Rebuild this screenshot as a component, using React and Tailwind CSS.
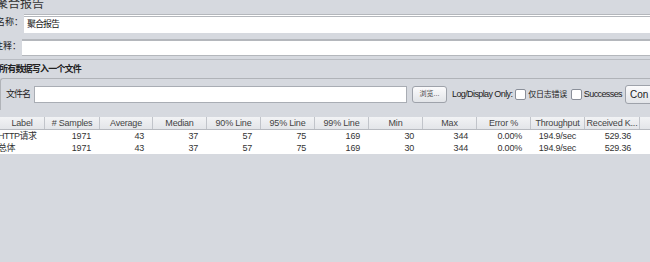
import React from 'react';

const cols = [
  { name: 'Label', w: 'w-[45px]' },
  { name: '# Samples', w: 'w-[55px]' },
  { name: 'Average', w: 'w-[53px]' },
  { name: 'Median', w: 'w-[54px]' },
  { name: '90% Line', w: 'w-[54px]' },
  { name: '95% Line', w: 'w-[54px]' },
  { name: '99% Line', w: 'w-[54px]' },
  { name: 'Min', w: 'w-[54px]' },
  { name: 'Max', w: 'w-[54px]' },
  { name: 'Error %', w: 'w-[54px]' },
  { name: 'Throughput', w: 'w-[54px]' },
  { name: 'Received K...', w: 'w-[55px]' },
  { name: 'S', w: 'w-[40px]' },
];

const rows = [
  ['HTTP请求', '1971', '43', '37', '57', '75', '169', '30', '344', '0.00%', '194.9/sec', '529.36', ''],
  ['总体', '1971', '43', '37', '57', '75', '169', '30', '344', '0.00%', '194.9/sec', '529.36', ''],
];

function Checkbox() {
  return <span className="inline-block w-[11px] h-[11px] border border-[#8a8f99] bg-white rounded-[2px]" />;
}

export default function App() {
  return (
    <div
      className="w-[650px] h-[262px] overflow-hidden bg-[#d6d9df] text-[#222] text-[9px] whitespace-nowrap"
      style={{ fontFamily: '"Liberation Sans", "Noto Sans CJK SC", sans-serif' }}
    >
      <div className="h-[14px] leading-[13px] text-[12px] -ml-[4px] -mt-[2px] text-[#333]">聚合报告</div>

      <div className="flex items-center h-[20px] mt-[1px]">
        <span className="w-[24px] shrink-0 flex justify-end overflow-hidden pr-[1px]">
          <span className="shrink-0">名称：</span>
        </span>
        <div className="flex-1 h-[19px] bg-white border-t-[3px] border-double border-[#b4b7bc] flex items-center pl-[3px] tracking-[-1px]">聚合报告</div>
      </div>

      <div className="flex items-center h-[18px] mt-[5px]">
        <span className="w-[22px] shrink-0 flex justify-end overflow-hidden pr-[1px]">
          <span className="shrink-0">注释：</span>
        </span>
        <div className="flex-1 h-[17px] bg-white border-t-[2px] border-b border-[#b4b7bc]" />
      </div>

      <div className="mt-[3px] border-t border-[#b9bcc2] pt-[4px]">
        <div className="font-bold h-[11px] leading-[11px] -ml-[1px] tracking-[-0.8px]">所有数据写入一个文件</div>
        <div className="mt-[3px] border-t border-l border-[#b0b3b8] rounded-tl-[3px] h-[32px] flex items-center pl-[5px]">
          <span className="w-[28px] shrink-0 tracking-[-1px]">文件名</span>
          <div className="w-[373px] h-[17px] bg-white border border-[#a9adb4] shrink-0" />
          <div className="ml-[5px] w-[35px] h-[17px] shrink-0 border border-[#9ea2aa] rounded-[3px] bg-gradient-to-b from-[#fbfbfc] to-[#e2e4e8] text-[7px] flex items-center justify-center text-[#444]">浏览...</div>
          <span className="ml-[5px] shrink-0 tracking-[-0.6px]">Log/Display Only:</span>
          <span className="ml-[3px] flex items-center shrink-0"><Checkbox /></span>
          <span className="ml-[2px] shrink-0 text-[8px] tracking-[-0.3px]">仅日志错误</span>
          <span className="ml-[4px] flex items-center shrink-0"><Checkbox /></span>
          <span className="ml-[2px] shrink-0 tracking-[-0.6px]">Successes</span>
          <div className="ml-[3px] w-[40px] h-[19px] border border-[#9ea2aa] rounded-[3px] bg-gradient-to-b from-[#fbfbfc] to-[#e2e4e8] flex items-center pl-[4px] shrink-0 text-[10px]">Con</div>
        </div>
      </div>

      <div className="mt-[7px]">
        <div className="flex h-[13px] bg-gradient-to-b from-[#f2f3f5] to-[#e3e5e9] border-b border-[#b7bac0]">
          {cols.map((c) => (
            <div key={c.name} className={`${c.w} shrink-0 border-r border-[#c1c4ca] text-center leading-[12px] text-[#444] tracking-[-0.2px] overflow-hidden`}>
              {c.name}
            </div>
          ))}
        </div>
        {rows.map((r, i) => (
          <div key={i} className="flex h-[12px] bg-white leading-[12px] text-[#333]">
            {r.map((v, j) => (
              <div key={j} className={`${cols[j].w} shrink-0 ${j === 0 ? 'text-left -ml-[2px] mr-[2px] tracking-[-0.5px]' : 'text-right pr-[9px] tracking-[-0.2px]'} overflow-hidden`}>
                {v}
              </div>
            ))}
          </div>
        ))}
      </div>
    </div>
  );
}
